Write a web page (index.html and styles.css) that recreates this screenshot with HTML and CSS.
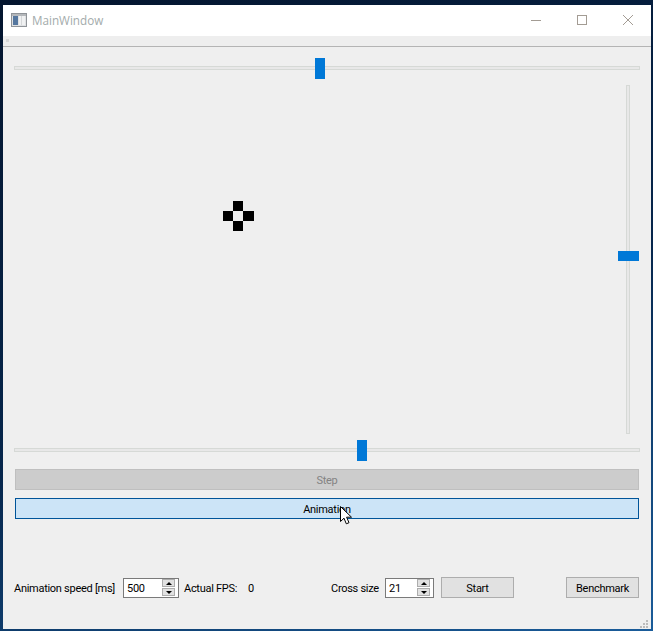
FILE: index.html
```html
<!DOCTYPE html>
<html lang="en">
<head>
    <meta charset="UTF-8">
    <meta name="viewport" content="width=device-width, initial-scale=1.0">
    <title>MainWindow</title>
    <link rel="stylesheet" href="styles.css">
</head>
<body>
    <div class="window">
        <div class="titlebar">
            <svg class="app-icon" width="16" height="14" viewBox="0 0 16 14">
                <rect x="0.5" y="0.5" width="15" height="13" fill="#dfe1e3" stroke="#8f9398"/>
                <rect x="1" y="1" width="14" height="2" fill="#b4b7bb"/>
                <rect x="2" y="3" width="5" height="9" fill="#55779f"/>
                <rect x="8" y="3" width="6" height="9" fill="#f0f1f2"/>
                <rect x="10" y="3" width="1" height="9" fill="#d5d7d9"/>
            </svg>
            <span class="title">MainWindow</span>
            <div class="caption-btn">
                <svg width="12" height="12" viewBox="0 0 12 12"><path d="M1 6.5H11" stroke="#a39c94"/></svg>
            </div>
            <div class="caption-btn">
                <svg width="12" height="12" viewBox="0 0 12 12"><rect x="1.5" y="1.5" width="9" height="9" fill="none" stroke="#a39c94"/></svg>
            </div>
            <div class="caption-btn">
                <svg width="12" height="12" viewBox="0 0 12 12"><path d="M1 1L11 11M11 1L1 11" stroke="#a39c94"/></svg>
            </div>
        </div>

        <div class="menubar"><span class="menu-ext"></span></div>

        <div class="hslider first">
            <div class="groove"></div>
            <div class="thumb thumb-top"></div>
        </div>

        <div class="middle">
            <div class="canvas">
                <div class="cross">
                    <span class="cell c-top"></span>
                    <span class="cell c-left"></span>
                    <span class="cell c-right"></span>
                    <span class="cell c-bottom"></span>
                </div>
            </div>
            <div class="vslider">
                <div class="vgroove"></div>
                <div class="vthumb"></div>
            </div>
        </div>

        <div class="hslider">
            <div class="groove"></div>
            <div class="thumb thumb-bottom"></div>
        </div>

        <button class="wide-btn step">Step</button>
        <button class="wide-btn anim">Animation</button>

        <div class="controls">
            <span class="lbl speed-lbl">Animation speed [ms]</span>
            <div class="spin spin-speed">
                <span class="spin-val">500</span>
                <div class="stepper">
                    <span class="step-btn"><i class="arrow-up"></i></span>
                    <span class="step-btn"><i class="arrow-down"></i></span>
                </div>
            </div>
            <span class="lbl fps-lbl">Actual FPS:</span>
            <span class="lbl fps-val">0</span>
            <span class="lbl cross-lbl">Cross size</span>
            <div class="spin spin-cross">
                <span class="spin-val">21</span>
                <div class="stepper">
                    <span class="step-btn"><i class="arrow-up"></i></span>
                    <span class="step-btn"><i class="arrow-down"></i></span>
                </div>
            </div>
            <button class="btn start">Start</button>
            <button class="btn bench">Benchmark</button>
        </div>

        <svg class="grip" width="8" height="8" viewBox="0 0 8 8" fill="#bbbbbb">
            <rect x="6" y="0" width="2" height="2"/>
            <rect x="3" y="3" width="2" height="2"/>
            <rect x="6" y="3" width="2" height="2"/>
            <rect x="0" y="6" width="2" height="2"/>
            <rect x="3" y="6" width="2" height="2"/>
            <rect x="6" y="6" width="2" height="2"/>
        </svg>

        <svg class="cursor" width="13" height="19" viewBox="0 0 13 19">
            <path d="M0.5 0.5V15.5L4 12.2L6.3 17.8L9 16.7L6.6 11.2H11.5Z" fill="#fff" stroke="#000"/>
        </svg>
    </div>
</body>
</html>
```

FILE: styles.css
```css
html, body {
    margin: 0;
    padding: 0;
    height: 100%;
    overflow: hidden;
}
body {
    background: linear-gradient(160deg, #04152e 0%, #06264c 55%, #1a5c9a 100%);
    font-family: Roboto, "Liberation Sans", sans-serif;
    font-size: 11px;
    letter-spacing: -0.28px;
    color: #000;
}
.window {
    position: absolute;
    left: 3px;
    top: 5px;
    width: 648px;
    height: 624px;
    background-color: #efefef;
}

/* title bar */
.titlebar {
    height: 31px;
    background-color: #fff;
    display: flex;
    align-items: center;
}
.app-icon {
    margin-left: 8px;
    margin-right: 5px;
    margin-top: -1px;
}
.title {
    flex: 1;
    font-family: "Open Sans", sans-serif;
    font-size: 11.7px;
    letter-spacing: 0;
    color: #a3abab;
    margin-top: -2px;
}
.caption-btn {
    width: 46px;
    height: 31px;
    display: flex;
    align-items: center;
    justify-content: center;
    margin-top: -2px;
}

.menubar {
    height: 10px;
    background-color: #eeeeee;
    border-bottom: 1px solid #b4b4b4;
    position: relative;
}
.menu-ext {
    position: absolute;
    left: 3px;
    top: 3px;
    width: 3px;
    height: 3px;
    background-color: #d8d8d8;
}

/* sliders */
.hslider {
    position: relative;
    height: 21px;
    margin: 0 11px;
}
.hslider.first {
    margin-top: 11px;
}
.groove {
    height: 2px;
    margin-top: 8px;
    background-color: #e8e8e8;
    border: 1px solid #d6d9d6;
    position: absolute;
    left: 0;
    right: 0;
}
.thumb {
    position: absolute;
    top: 0;
    width: 10px;
    height: 21px;
    background-color: #0078d7;
}
.thumb-top {
    left: 301px;
}
.thumb-bottom {
    left: 343px;
}
.middle {
    display: flex;
    height: 361px;
}
.canvas {
    flex: 1;
    position: relative;
}
.cross {
    position: absolute;
    left: 220px;
    top: 122px;
    width: 31px;
    height: 30px;
}
.cell {
    position: absolute;
    background-color: #000;
    width: 10px;
    height: 10px;
}
.c-top {
    left: 10px;
    top: 0;
}
.c-left {
    left: 0;
    top: 10px;
}
.c-right {
    left: 20px;
    top: 10px;
    width: 11px;
}
.c-bottom {
    left: 10px;
    top: 20px;
}
.vslider {
    position: relative;
    width: 21px;
    margin-right: 12px;
}
.vgroove {
    position: absolute;
    left: 8px;
    top: 6px;
    bottom: 6px;
    width: 2px;
    background-color: #e8e8e8;
    border: 1px solid #d6d9d6;
}
.vthumb {
    position: absolute;
    left: 0;
    top: 172px;
    width: 21px;
    height: 10px;
    background-color: #0078d7;
}

/* buttons */
button {
    font-family: inherit;
    font-size: inherit;
    letter-spacing: inherit;
    padding: 1px 0 0 0;
    box-sizing: border-box;
}
.wide-btn {
    display: block;
    width: 624px;
    height: 21px;
    margin-left: 12px;
}
.step {
    margin-top: 8px;
    background-color: #cccccc;
    border: 1px solid #bfbfbf;
    color: #838383;
}
.anim {
    margin-top: 8px;
    background-color: #cce4f7;
    border: 1px solid #005499;
    color: #000;
}
.controls {
    display: flex;
    align-items: center;
    height: 21px;
    margin-top: 58px;
    margin-left: 11px;
}
.lbl {
    white-space: nowrap;
    padding-top: 1px;
}
.btn {
    width: 73px;
    height: 21px;
    background-color: #e1e1e1;
    border: 1px solid #adadad;
    color: #000;
}
.speed-lbl {
    width: 109px;
}
.fps-lbl {
    margin-left: 5px;
    width: 64px;
}
.fps-val {
    width: 83px;
}
.cross-lbl {
    width: 54px;
}
.start {
    margin-left: 7px;
}
.bench {
    margin-left: 52px;
}

/* spin boxes */
.spin {
    box-sizing: border-box;
    height: 20px;
    background-color: #fff;
    border: 1px solid #7a7a7a;
    display: flex;
    align-items: center;
    padding: 0 3px 0 3px;
}
.spin-speed {
    width: 56px;
}
.spin-cross {
    width: 49px;
}
.spin-val {
    flex: 1;
    padding-top: 1px;
}
.stepper {
    display: flex;
    flex-direction: column;
    gap: 1px;
    width: 13px;
}
.step-btn {
    box-sizing: border-box;
    height: 8px;
    background-color: #e1e1e1;
    border: 1px solid #adadad;
    display: flex;
    align-items: center;
    justify-content: center;
}
.arrow-up {
    border-left: 3px solid transparent;
    border-right: 3px solid transparent;
    border-bottom: 3px solid #000;
}
.arrow-down {
    border-left: 3px solid transparent;
    border-right: 3px solid transparent;
    border-top: 3px solid #000;
}

/* overlays */
.grip {
    position: absolute;
    right: 3px;
    bottom: 1px;
}
.cursor {
    position: absolute;
    left: 337px;
    top: 501px;
}
```
